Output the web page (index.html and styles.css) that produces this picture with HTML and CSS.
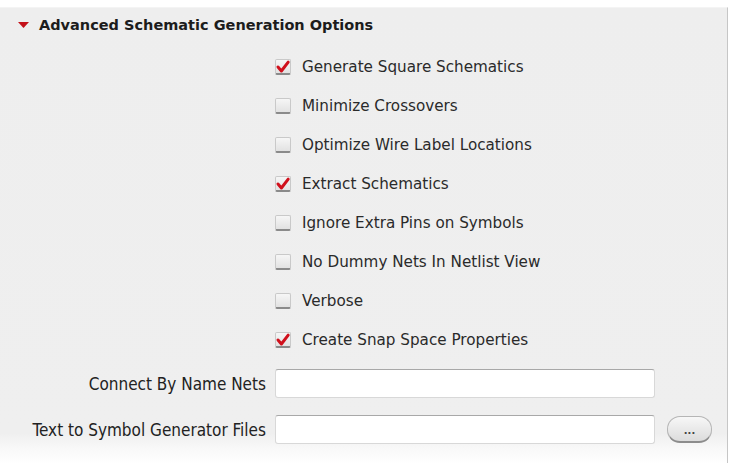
FILE: index.html
```html
<!DOCTYPE html>
<html>
<head>
<meta charset="utf-8">
<link rel="stylesheet" href="styles.css">
</head>
<body>
<div class="panel">
  <div class="header">
    <svg class="tri" width="11" height="6" viewBox="0 0 11 6"><polygon points="0,0 11,0 5.5,6" fill="#c4121a"/></svg>
    <span class="title">Advanced Schematic Generation Options</span>
  </div>
  <div class="checks">
    <label class="row"><span class="box on"><svg viewBox="0 0 16 16" width="16" height="16"><path d="M3 8 L6.4 12 L13.2 3.2" fill="none" stroke="#d0101c" stroke-width="3" stroke-linecap="round" stroke-linejoin="round"/></svg></span><span class="lbl">Generate Square Schematics</span></label>
    <label class="row"><span class="box"></span><span class="lbl">Minimize Crossovers</span></label>
    <label class="row"><span class="box"></span><span class="lbl">Optimize Wire Label Locations</span></label>
    <label class="row"><span class="box on"><svg viewBox="0 0 16 16" width="16" height="16"><path d="M3 8 L6.4 12 L13.2 3.2" fill="none" stroke="#d0101c" stroke-width="3" stroke-linecap="round" stroke-linejoin="round"/></svg></span><span class="lbl">Extract Schematics</span></label>
    <label class="row"><span class="box"></span><span class="lbl">Ignore Extra Pins on Symbols</span></label>
    <label class="row"><span class="box"></span><span class="lbl">No Dummy Nets In Netlist View</span></label>
    <label class="row"><span class="box"></span><span class="lbl">Verbose</span></label>
    <label class="row"><span class="box on"><svg viewBox="0 0 16 16" width="16" height="16"><path d="M3 8 L6.4 12 L13.2 3.2" fill="none" stroke="#d0101c" stroke-width="3" stroke-linecap="round" stroke-linejoin="round"/></svg></span><span class="lbl">Create Snap Space Properties</span></label>
  </div>
  <div class="form">
    <span class="flabel">Connect By Name Nets</span>
    <span class="field"></span>
    <span></span>
    <span class="flabel">Text to Symbol Generator Files</span>
    <span class="field"></span>
    <span class="btn">...</span>
  </div>
</div>
</body>
</html>
```

FILE: styles.css
```css
html, body {
  margin: 0;
  padding: 0;
  background: #ffffff;
}
body {
  width: 734px;
  height: 463px;
  overflow: hidden;
  font-family: "DejaVu Sans", sans-serif;
  color: #222;
}
.panel {
  margin-top: 7px;
  width: 728px;
  height: 456px;
  box-sizing: border-box;
  border-right: 1px solid #c6c6c6;
  border-top: 1px solid #f4f4f4;
  background: linear-gradient(to bottom, #eeeeee 0px, #efefef 425px, #f8f8f8 440px, #ffffff 456px);
  display: flex;
  flex-direction: column;
}
.header {
  height: 33px;
  display: flex;
  align-items: center;
  padding-left: 18px;
  gap: 10px;
}
.tri { display: block; margin-top: 1px; }
.title {
  font-weight: bold;
  font-size: 14.5px;
  color: #1c1c1c;
}
.checks {
  display: flex;
  flex-direction: column;
  padding-left: 275px;
  padding-top: 6.5px;
}
.row {
  height: 39px;
  display: flex;
  align-items: center;
  gap: 11px;
}
.box {
  width: 16px;
  height: 16px;
  box-sizing: border-box;
  border: 1px solid #c9c9c9;
  border-bottom: 2px solid #8a8a8a;
  border-radius: 2px;
  background: linear-gradient(to bottom, #f6f6f6, #e2e2e2);
  position: relative;
}
.box svg {
  position: absolute;
  left: -1px;
  top: -1px;
}
.lbl {
  font-size: 15.2px;
  color: #2a2a2a;
}
.form {
  margin-top: 9.5px;
  display: grid;
  grid-template-columns: 266px 380px 57px;
  column-gap: 9px;
  row-gap: 17px;
  align-items: center;
}
.flabel {
  text-align: right;
  font-family: "DejaVu Sans Condensed", "DejaVu Sans", sans-serif;
  font-stretch: condensed;
  font-size: 17px;
  color: #222;
}
.field {
  height: 29px;
  box-sizing: border-box;
  background: #fff;
  border: 1px solid #d8d8d8;
  border-top: 1px solid #a8a8a8;
  border-radius: 3px;
}
.btn {
  margin-left: 3px;
  width: 45px;
  height: 27px;
  box-sizing: border-box;
  border-radius: 13px;
  border: 1px solid #b5b5b5;
  border-bottom: 2px solid #8c8c8c;
  background: linear-gradient(to bottom, #f7f7f7, #dcdcdc);
  font-size: 10px;
  font-weight: bold;
  color: #444;
  display: flex;
  align-items: center;
  justify-content: center;
  line-height: 1;
  padding-top: 3px;
}
```
